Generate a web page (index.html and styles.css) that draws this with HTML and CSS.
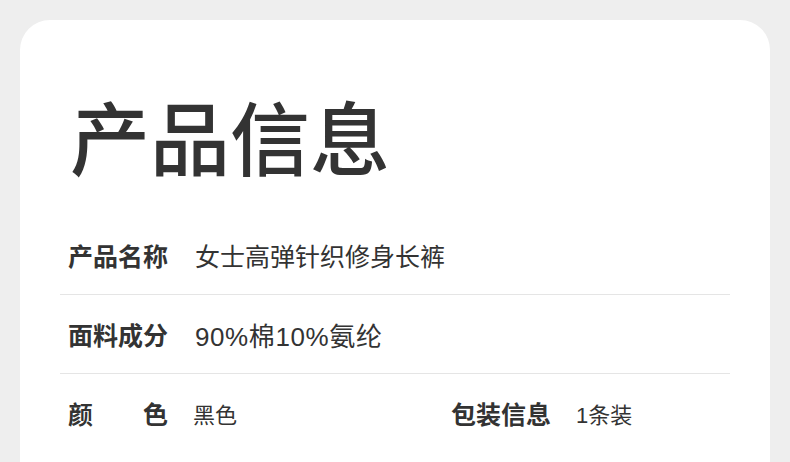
FILE: index.html
```html
<!doctype html>
<html>
<head>
<meta charset="utf-8" />
<title>产品信息</title>
<link rel="stylesheet" href="styles.css">
</head>
<body>
	<div class="wrap">
		<div class="card">
			<h1 class="title">产品信息</h1>
			<div class="row">
				<span class="label">产品名称</span>
				<span class="value">女士高弹针织修身长裤</span>
			</div>
			<div class="row">
				<span class="label">面料成分</span>
				<span class="value num">90%棉10%氨纶</span>
			</div>
			<div class="row half">
				<div class="cell">
					<span class="label">颜色</span>
					<span class="value small">黑色</span>
				</div>
				<div class="cell">
					<span class="label">包装信息</span>
					<span class="value small">1条装</span>
				</div>
			</div>
		</div>
	</div>
</body>
</html>
```

FILE: styles.css
```css
	body{margin:0; background:#eee; font-family:"Liberation Sans","Noto Sans CJK SC",sans-serif; color:#333;}
	.wrap{padding:20px; height:422px; overflow:hidden;}
	.card{background:#fff; border-radius:30px; padding:74px 40px 40px; min-height:500px;}
	.title{margin:0 0 42px 10px; font-size:80px; line-height:80px; font-weight:500; font-family:"Noto Sans CJK SC",sans-serif;}
	.row{height:78px; border-bottom:1px solid #e5e5e5; display:flex; align-items:center; padding:0 8px;}
	.half{display:grid; grid-template-columns:383px 1fr; border-bottom:none;}
	.cell{display:flex; align-items:center;}
	.label{width:100px; margin-right:27px; font-size:25px; font-weight:700; font-family:"Noto Sans CJK SC",sans-serif; text-align-last:justify;}
	.half .label{margin-right:25px;}
	.value{font-size:25px;}
	.num{font-size:26px; letter-spacing:0.6px;}
	.small{font-size:22px;}
```
